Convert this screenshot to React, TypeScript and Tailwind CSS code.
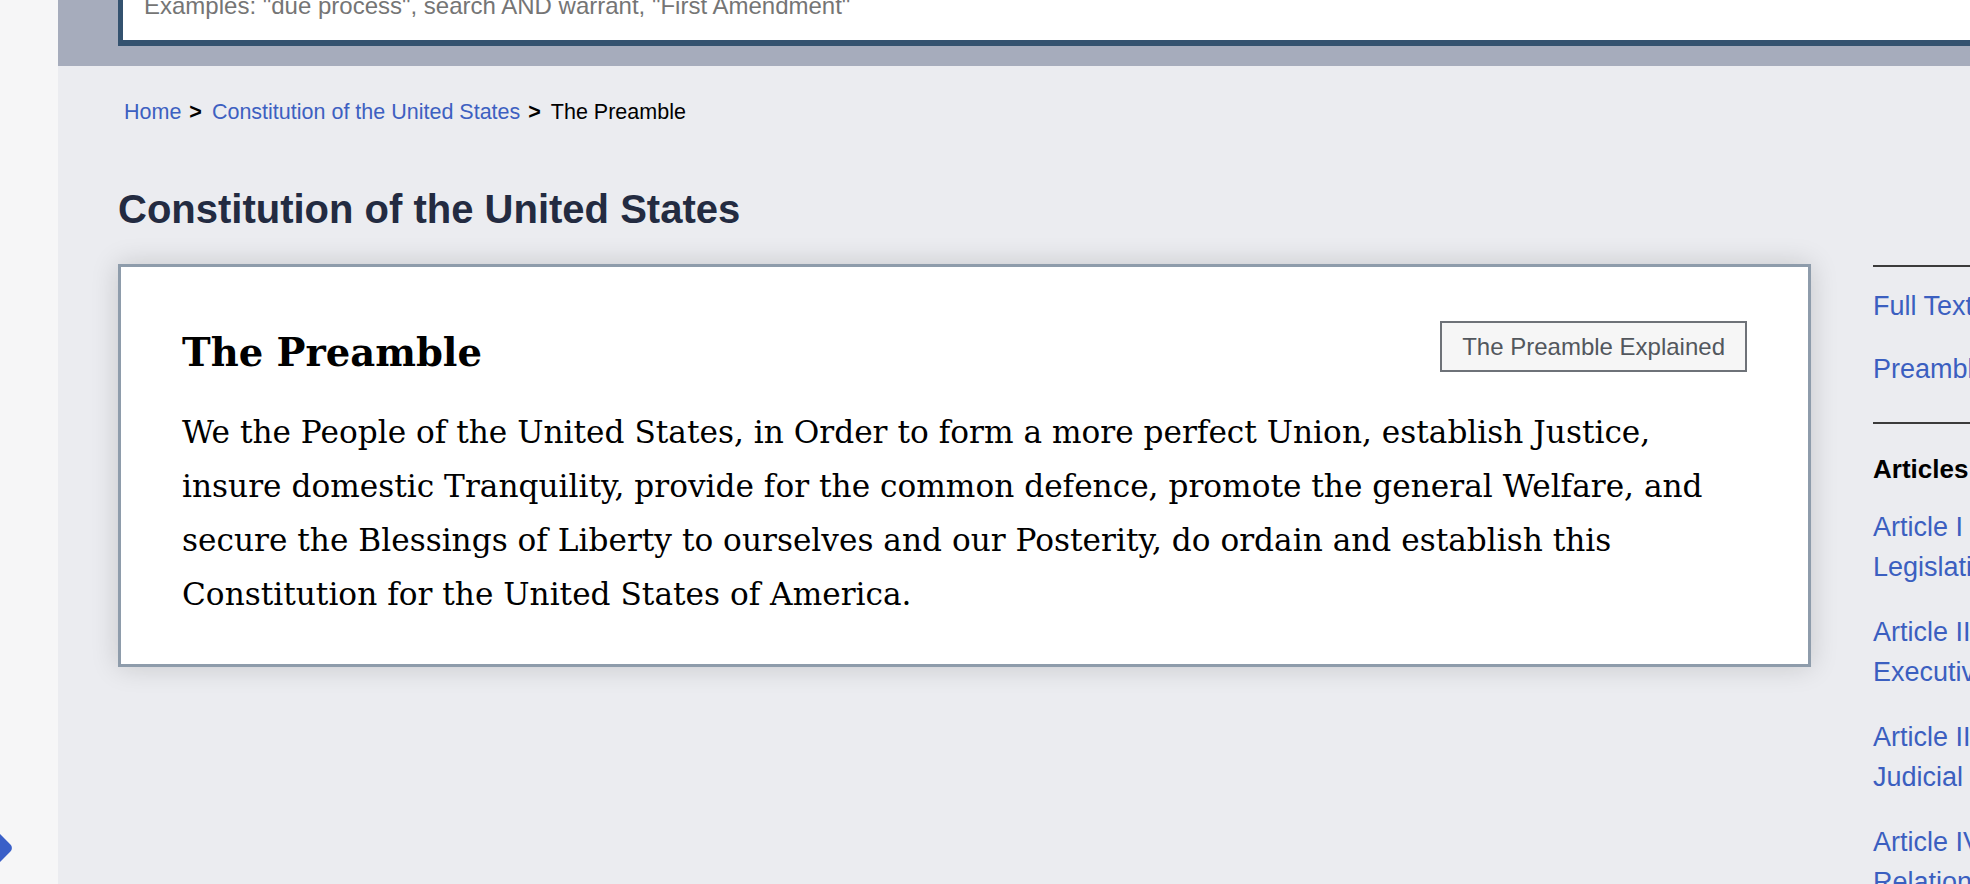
const SIDE_ARTICLES = [
  ["Article I", "Legislative Branch"],
  ["Article II", "Executive Branch"],
  ["Article III", "Judicial Branch"],
  ["Article IV", "Relationships Between States"],
  ["Article V", "Amendment Process"],
];

export default function App() {
  return (
    <div className="relative flex h-[884px] w-[1970px] overflow-hidden bg-[#ebecf0] font-['Liberation_Sans',Arial,sans-serif]">
      <div className="relative w-[58px] shrink-0 bg-[#f6f6f7]">
        <div className="absolute left-[-15px] top-[836px] h-[24px] w-[24px] rotate-45 rounded-[5px] bg-[#3a5fc8]" />
      </div>

      <div className="flex min-w-0 flex-1 flex-col">
        <div className="h-[66px] shrink-0 bg-[#a6acbc] pl-[60px]">
          <div className="flex h-[46px] items-end border-b-[6px] border-l-[5px] border-[#34526f] bg-white pb-[22px] pl-[21px]">
            <span className="whitespace-nowrap text-[24px] leading-[24px] text-[#757575]">
              Examples: "due process", search AND warrant, "First Amendment"
            </span>
          </div>
        </div>

        <nav className="mt-[34px] flex items-center pl-[66px] text-[21.5px] leading-[24px]">
          <a className="text-[#3d60c1]">Home</a>
          <span className="ml-[8px] mr-[10px] font-bold text-black">&gt;</span>
          <a className="text-[#3d60c1]">Constitution of the United States</a>
          <span className="ml-[8px] mr-[10px] font-bold text-black">&gt;</span>
          <span className="text-black">The Preamble</span>
        </nav>

        <h1 className="mt-[61px] pl-[60px] text-[40px] font-bold leading-[48px] text-[#232b41]">
          Constitution of the United States
        </h1>

        <div className="mt-[31px] flex items-start gap-[62px] pl-[60px]">
          <section className="h-[403px] w-[1693px] shrink-0 border-[3px] border-[#8e9cab] bg-white px-[61px] pt-[54px] shadow-[0_0_26px_rgba(0,0,0,0.16)]">
            <div className="flex items-start justify-between">
              <h2 className="mt-[12px] font-['DejaVu_Serif',Georgia,serif] text-[38.5px] font-bold leading-[40px] text-black">
                The Preamble
              </h2>
              <button className="flex h-[51px] items-center border-2 border-[#6e7278] bg-[#f6f6f6] px-[20px] text-[24px] leading-none text-[#52575d]">
                The Preamble Explained
              </button>
            </div>
            <p className="mt-[32px] font-['DejaVu_Serif',Georgia,serif] text-[31.2px] leading-[54px] text-black">
              We the People of the United States, in Order to form a more perfect Union, establish
              Justice, insure domestic Tranquility, provide for the common defence, promote the
              general Welfare, and secure the Blessings of Liberty to ourselves and our Posterity,
              do ordain and establish this Constitution for the United States of America.
            </p>
          </section>

          <aside className="w-[300px] shrink-0 text-[27px] text-[#3b5fc0]">
            <div className="mt-[1px] h-[2px] bg-[#3b3b3b]" />
            <a className="mt-[24px] block leading-[30px]">Full Text</a>
            <a className="mt-[33px] block leading-[30px]">Preamble</a>
            <div className="mt-[38px] h-[2px] bg-[#3b3b3b]" />
            <div className="mt-[30px] text-[26px] font-bold leading-[30px] text-black">Articles</div>
            <ul className="mt-[23px] flex flex-col gap-[25px]">
              {SIDE_ARTICLES.map(([a, b]) => (
                <li key={a} className="leading-[40px]">
                  <a className="block">{a}</a>
                  <a className="block whitespace-nowrap">{b}</a>
                </li>
              ))}
            </ul>
          </aside>
        </div>
      </div>
    </div>
  );
}
